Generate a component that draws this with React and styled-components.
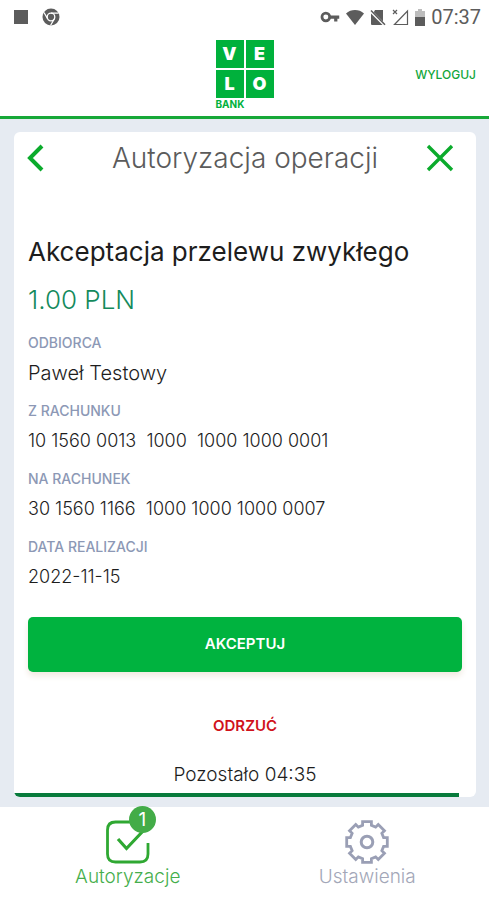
import React from "react";
import styled, { createGlobalStyle } from "styled-components";

const GlobalStyle = createGlobalStyle`
  *, *::before, *::after { box-sizing: border-box; }
  body {
    margin: 0;
    background: #e6ebf2;
    color: #1d1d1d;
    font-family: Inter, "Open Sans", sans-serif;
  }
  button { font-family: inherit; }
  h1, h2, p, dl, dd { margin: 0; }
`;

const Page = styled.div`
  display: flex;
  flex-direction: column;
  min-height: 100vh;
`;

const StatusBar = styled.div`
  display: flex;
  justify-content: space-between;
  align-items: center;
  height: 34px;
  padding: 0 8px 0 13px;
  background: #fff;
  color: #5c5c5c;
`;

const StatusGroup = styled.div`
  display: flex;
  align-items: center;
  gap: ${(p) => p.$gap}px;
`;

const Clock = styled.time`
  font: 400 20px/24px Roboto, sans-serif;
`;

const Header = styled.header`
  display: grid;
  grid-template-columns: 1fr auto 1fr;
  align-items: center;
  height: 85px;
  padding: 0 13px;
  background: #fff;
  border-bottom: 3px solid #17a838;
`;

const Logo = styled.div`
  grid-column: 2;
  color: #00b13c;
`;

const LogoTiles = styled.div`
  display: grid;
  grid-template-columns: 28px 28px;
  gap: 2px;
`;

const LogoTile = styled.span`
  height: 28px;
  background: #00b13c;
  color: #fff;
  font-size: 18px;
  font-weight: 900;
  line-height: 28px;
  text-align: center;
`;

const LogoCaption = styled.div`
  font-size: 10px;
  font-weight: 700;
  line-height: 13px;
`;

const LogoutButton = styled.button`
  justify-self: end;
  padding: 0;
  border: 0;
  background: none;
  color: #12a63a;
  font-size: 12px;
  font-weight: 500;
  line-height: 16px;
`;

const Main = styled.main`
  display: flex;
  flex: 1;
  padding: 13px 13px 10px 14px;
`;

const Card = styled.section`
  display: flex;
  flex: 1;
  flex-direction: column;
  overflow: hidden;
  background: #fff;
  border-radius: 6px;
`;

const CardHeader = styled.div`
  display: grid;
  grid-template-columns: 1fr auto 1fr;
  align-items: center;
  height: 52px;
  padding: 0 12px;
`;

const Title = styled.h1`
  color: #5b5b5b;
  font-size: 28px;
  font-weight: 300;
  line-height: 32px;
`;

const IconButton = styled.button`
  display: flex;
  justify-self: ${(p) => (p.$end ? "end" : "start")};
  padding: ${(p) => (p.$end ? "0 10px" : "0")};
  border: 0;
  background: none;
  color: #0bab2c;
`;

const Content = styled.div`
  flex: 1;
  padding: 52px 14px 0;
`;

const OperationName = styled.h2`
  font-size: 26px;
  font-weight: 400;
  line-height: 32px;
`;

const Amount = styled.p`
  margin-top: 12px;
  color: #148a5c;
  font-size: 26px;
  font-weight: 300;
  line-height: 40px;
`;

const Details = styled.dl`
  display: grid;
  gap: 12px;
  margin-top: 13px;
`;

const Label = styled.dt`
  color: #8c98b5;
  font-size: 14px;
  font-weight: 500;
  line-height: 20px;
`;

const Value = styled.dd`
  padding-top: 4px;
  font-size: ${(p) => (p.$name ? 20 : 18)}px;
  font-weight: 300;
  line-height: 32px;
  white-space: pre-wrap;
`;

const Actions = styled.div`
  display: flex;
  flex-direction: column;
  align-items: center;
  margin-top: 24px;
`;

const AcceptButton = styled.button`
  width: 100%;
  height: 55px;
  padding: 0 0 3px;
  border: 0;
  border-radius: 5px;
  background: #00b33f;
  box-shadow: 0 4px 6px #f0e9e0;
  color: #fff;
  font-size: 15px;
  font-weight: 600;
`;

const RejectButton = styled.button`
  margin-top: 38px;
  padding: 0;
  border: 0;
  background: none;
  color: #d0121b;
  font-size: 15px;
  font-weight: 600;
  line-height: 32px;
`;

const Remaining = styled.p`
  margin-top: 17px;
  font-size: 19px;
  font-weight: 300;
  line-height: 32px;
`;

const TimeTrack = styled.div`
  height: 4px;
`;

const TimeLeft = styled.div`
  height: 100%;
  background: #087b3c;
`;

const BottomNav = styled.nav`
  display: grid;
  grid-template-columns: 1fr 1fr;
  height: 93px;
  padding: 0 2px 0 8px;
  background: #fff;
`;

const NavItem = styled.a`
  display: flex;
  flex-direction: column;
  align-items: center;
  padding-top: 13px;
  color: ${(p) => (p.$active ? "#45ae4c" : "#a3a7b8")};
  font-size: 19px;
  font-weight: 300;
  line-height: 24px;
  text-decoration: none;
`;

const NavIcon = styled.span`
  position: relative;
  display: block;
  height: 45px;
`;

const Badge = styled.span`
  position: absolute;
  top: -14px;
  right: -6px;
  width: 27px;
  height: 27px;
  border-radius: 50%;
  background: #43ac48;
  color: #fff;
  font-size: 19px;
  font-weight: 400;
  line-height: 27px;
  text-align: center;
`;

const ChromeIcon = () => (
  <svg width="18" height="18" viewBox="0 0 18 18" aria-hidden="true">
    <circle cx="9" cy="9" r="8.5" fill="#5c5c5c" />
    <circle cx="9" cy="9" r="3.8" fill="#5c5c5c" stroke="#fff" strokeWidth="1.3" />
    <path d="M9 5.2H16.6M5.7 10.9L2 4.5M12.3 10.9L8.5 17.5" stroke="#fff" strokeWidth="1.2" />
  </svg>
);

const KeyIcon = () => (
  <svg width="20" height="12" viewBox="0 0 21 13" aria-hidden="true">
    <circle cx="6" cy="6.5" r="4.2" fill="none" stroke="currentColor" strokeWidth="3" />
    <path d="M10 5H20.5V8.5H18.5V11.5H15V8.5H10Z" fill="currentColor" />
  </svg>
);

const WifiIcon = () => (
  <svg width="18" height="15" viewBox="0 0 18 15" aria-hidden="true">
    <path d="M0 3.5C5-1.1 13-1.1 18 3.5L9 15Z" fill="currentColor" />
  </svg>
);

const NoSimIcon = () => (
  <svg width="16" height="17" viewBox="0 0 16 17" aria-hidden="true">
    <path d="M5 1H13V12.5L3.8 3.2Z" fill="currentColor" />
    <path d="M1 4.5L12.5 16H2Q1 16 1 15Z" fill="currentColor" />
    <path d="M1 1.5L15 15.8" stroke="currentColor" strokeWidth="1.6" />
  </svg>
);

const SignalIcon = () => (
  <svg width="17" height="17" viewBox="0 0 17 17" aria-hidden="true">
    <path d="M2.5 15.5H15.5V2Z" fill="none" stroke="currentColor" strokeWidth="1.2" />
    <path d="M1 1L5 5M5 1L1 5" stroke="currentColor" strokeWidth="1.2" />
  </svg>
);

const BatteryIcon = () => (
  <svg width="10" height="17" viewBox="0 0 10 17" aria-hidden="true">
    <path d="M3 0H7V2H10V9H0V2H3Z" fill="#bdbdbd" />
    <path d="M0 8H10V17H0Z" fill="currentColor" />
  </svg>
);

const BackIcon = () => (
  <svg width="20" height="28" viewBox="0 0 20 28" fill="none" aria-hidden="true">
    <path d="M16 2L4 14L16 26" stroke="currentColor" strokeWidth="4" />
  </svg>
);

const CloseIcon = () => (
  <svg width="28" height="28" viewBox="0 0 28 28" fill="none" aria-hidden="true">
    <path d="M2 2L26 26M26 2L2 26" stroke="currentColor" strokeWidth="3.4" />
  </svg>
);

const TaskIcon = () => (
  <svg width="44" height="44" viewBox="0 0 44 44" fill="none" stroke="#2fa832" strokeWidth="2.8" aria-hidden="true">
    <path d="M26 2H9.5Q1.5 2 1.5 10V34Q1.5 42 9.5 42H34Q42 42 42 34V23" />
    <path d="M12 19L20.5 28.5L38 10" strokeWidth="3.2" />
  </svg>
);

const gearPoints = Array.from({ length: 8 }, (_, i) => {
  const a = (i * Math.PI) / 4;
  return [[-4.4, -16.6], [-4.4, -20.3], [4.4, -20.3], [4.4, -16.6]]
    .map(([x, y]) => `${22 + x * Math.cos(a) - y * Math.sin(a)},${22 + x * Math.sin(a) + y * Math.cos(a)}`)
    .join(" ");
}).join(" ");

const GearIcon = () => (
  <svg width="44" height="44" viewBox="0 0 44 44" fill="none" stroke="#9a9fb5" strokeWidth="2.8" aria-hidden="true">
    <polygon points={gearPoints} />
    <circle cx="22" cy="22" r="5.8" strokeWidth="3" />
  </svg>
);

const StopIcon = () => (
  <svg width="16" height="16" viewBox="0 0 16 16" aria-hidden="true">
    <rect x="1" y="1" width="14" height="14" fill="currentColor" />
  </svg>
);

const details = [
  { label: "ODBIORCA", value: "Paweł Testowy", name: true },
  { label: "Z RACHUNKU", value: "10 1560 0013  1000  1000 1000 0001" },
  { label: "NA RACHUNEK", value: "30 1560 1166  1000 1000 1000 0007" },
  { label: "DATA REALIZACJI", value: "2022-11-15" },
];

export default function App() {
  return (
    <Page>
      <GlobalStyle />
      <StatusBar>
        <StatusGroup $gap={13}>
          <StopIcon />
          <ChromeIcon />
        </StatusGroup>
        <StatusGroup $gap={6}>
          <KeyIcon />
          <WifiIcon />
          <NoSimIcon />
          <SignalIcon />
          <BatteryIcon />
          <Clock>07:37</Clock>
        </StatusGroup>
      </StatusBar>
      <Header>
        <Logo>
          <LogoTiles>
            {["V", "E", "L", "O"].map((letter) => (
              <LogoTile key={letter}>{letter}</LogoTile>
            ))}
          </LogoTiles>
          <LogoCaption>BANK</LogoCaption>
        </Logo>
        <LogoutButton type="button">WYLOGUJ</LogoutButton>
      </Header>
      <Main>
        <Card>
          <CardHeader>
            <IconButton type="button" aria-label="Wstecz"><BackIcon /></IconButton>
            <Title>Autoryzacja operacji</Title>
            <IconButton type="button" aria-label="Zamknij" $end><CloseIcon /></IconButton>
          </CardHeader>
          <Content>
            <OperationName>Akceptacja przelewu zwykłego</OperationName>
            <Amount>1.00 PLN</Amount>
            <Details>
              {details.map(({ label, value, name }) => (
                <div key={label}>
                  <Label>{label}</Label>
                  <Value $name={name}>{value}</Value>
                </div>
              ))}
            </Details>
            <Actions>
              <AcceptButton type="button">AKCEPTUJ</AcceptButton>
              <RejectButton type="button">ODRZUĆ</RejectButton>
              <Remaining>Pozostało 04:35</Remaining>
            </Actions>
          </Content>
          <TimeTrack>
            <TimeLeft style={{ width: `${(445 / 462) * 100}%` }} />
          </TimeTrack>
        </Card>
      </Main>
      <BottomNav>
        <NavItem href="#autoryzacje" $active>
          <NavIcon>
            <TaskIcon />
            <Badge>1</Badge>
          </NavIcon>
          Autoryzacje
        </NavItem>
        <NavItem href="#ustawienia">
          <NavIcon><GearIcon /></NavIcon>
          Ustawienia
        </NavItem>
      </BottomNav>
    </Page>
  );
}
